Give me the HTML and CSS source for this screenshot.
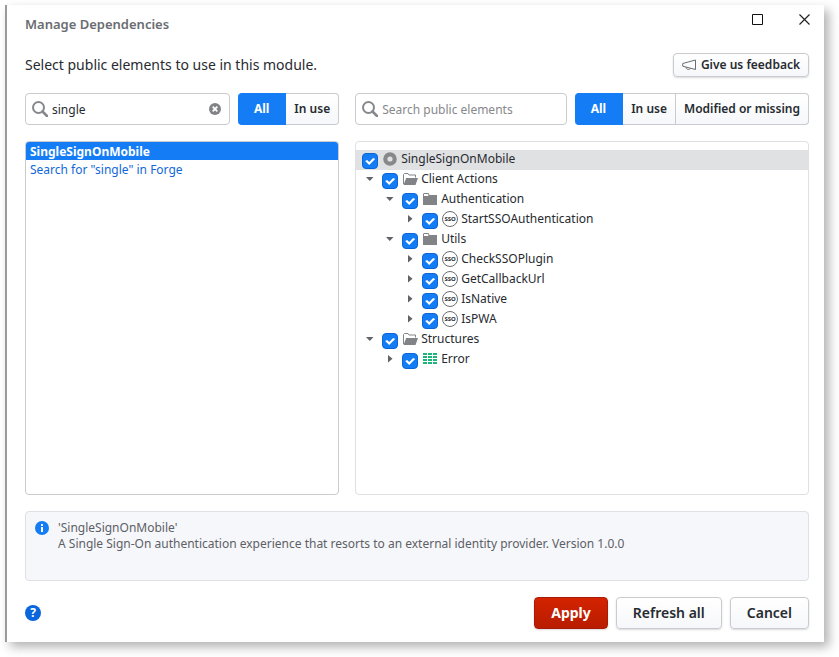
FILE: index.html
```html
<!DOCTYPE html>
<html lang="en">
<head>
<meta charset="utf-8">
<title>Manage Dependencies</title>
<link rel="stylesheet" href="styles.css">
</head>
<body>
<svg class="sprite" aria-hidden="true">
  <symbol id="search" viewBox="0 0 16 16"><circle cx="6.5" cy="6.5" r="5.5" fill="none" stroke="#86888b" stroke-width="2"/><path d="M10.5 10.5 15 15" stroke="#86888b" stroke-width="2.6" stroke-linecap="round"/></symbol>
  <symbol id="open-folder" viewBox="0 0 15 12"><path d="M.5 11V1.500L1.500 .5H5L6 2H12.500V4.500" fill="none" stroke="#818386"/><path d="M3.200 5H15L12.500 12H.5Z" fill="#818386"/></symbol>
  <symbol id="folder" viewBox="0 0 15 12"><path d="M0 1 1 0H5.500L6.500 2H14V12H0Z" fill="#818386"/><path d="M1 1H5L5.500 2.500 5 3H1Z" fill="#fff"/></symbol>
  <symbol id="ring" viewBox="0 0 14 14"><circle cx="7" cy="7" r="4.700" fill="#e0e1e3" stroke="#86888b" stroke-width="4.200"/></symbol>
  <symbol id="down" viewBox="0 0 8 8"><path d="M0 2H7.500L3.800 6Z" fill="#606368"/></symbol>
  <symbol id="right" viewBox="0 0 8 8"><path d="M2 0 6.500 3.800 2 7.500Z" fill="#606368"/></symbol>
  <symbol id="table" viewBox="0 0 14 12"><path d="M0 1H4M5 1H9M10 1H14M0 4H4M5 4H9M10 4H14M0 7H4M5 7H9M10 7H14M0 10H4M5 10H9M10 10H14" stroke="#1fb57a" stroke-width="2"/></symbol>
</svg>
<main class="dialog">
  <header class="titlebar">
    <h1>Manage Dependencies</h1>
    <div class="window-controls">
      <button aria-label="Maximize"><svg width="13" height="13" viewBox="0 0 13 13"><path d="M1.500 1.500H11.500V11.500H1.500Z" fill="none" stroke="#111"/></svg></button>
      <button aria-label="Close"><svg width="13" height="13" viewBox="0 0 13 13"><path d="M1.500 1.500 11.500 11.500M11.500 1.500 1.500 11.500" stroke="#222" stroke-width="1.200"/></svg></button>
    </div>
  </header>
  <div class="intro">
    <p>Select public elements to use in this module.</p>
    <button class="button small"><svg width="15" height="12" viewBox="0 0 15 12"><path d="M.7 4.500 13.500 1V10.500L.7 7.200ZM4 8.200C4 11 8 11 8.300 9.300" fill="none" stroke="#6a6d71"/></svg>Give us feedback</button>
  </div>
  <div class="columns">
    <section class="column">
      <div class="toolbar">
        <div class="search">
          <svg class="lens"><use href="#search"/></svg>
          <input type="text" value="single" aria-label="Search modules">
          <button class="clear" aria-label="Clear search"><svg width="12" height="12" viewBox="0 0 12 12"><circle cx="6" cy="6" r="6" fill="#818386"/><path d="M3.700 3.700 8.300 8.300M8.300 3.700 3.700 8.300" stroke="#fff" stroke-width="1.800"/></svg></button>
        </div>
        <div class="segments"><button class="active">All</button><button>In use</button></div>
      </div>
      <div class="panel modules">
        <a class="selected" href="#">SingleSignOnMobile</a>
        <a href="#">Search for "single" in Forge</a>
      </div>
    </section>
    <section class="column">
      <div class="toolbar">
        <div class="search">
          <svg class="lens"><use href="#search"/></svg>
          <input type="text" placeholder="Search public elements" aria-label="Search public elements">
        </div>
        <div class="segments"><button class="active">All</button><button>In use</button><button>Modified or missing</button></div>
      </div>
      <div class="panel elements">
        <div class="row root"><input type="checkbox" id="e0" checked><svg class="icon"><use href="#ring" x="1" y="1" width="14" height="14"/></svg><label for="e0">SingleSignOnMobile</label></div>
        <ul>
          <li>
            <div class="row"><button class="twisty" aria-label="Collapse"><svg><use href="#down"/></svg></button><input type="checkbox" id="e1" checked><svg class="icon"><use href="#open-folder" x="1" y="2" width="15" height="12"/></svg><label for="e1">Client Actions</label></div>
            <ul>
              <li>
                <div class="row"><button class="twisty" aria-label="Collapse"><svg><use href="#down"/></svg></button><input type="checkbox" id="e2" checked><svg class="icon"><use href="#folder" x="1" y="2" width="15" height="12"/></svg><label for="e2">Authentication</label></div>
                <ul>
                  <li><div class="row"><button class="twisty" aria-label="Expand"><svg><use href="#right"/></svg></button><input type="checkbox" id="e3" checked><span class="icon sso">SSO</span><label for="e3">StartSSOAuthentication</label></div></li>
                </ul>
              </li>
              <li>
                <div class="row"><button class="twisty" aria-label="Collapse"><svg><use href="#down"/></svg></button><input type="checkbox" id="e4" checked><svg class="icon"><use href="#folder" x="1" y="2" width="15" height="12"/></svg><label for="e4">Utils</label></div>
                <ul>
                  <li><div class="row"><button class="twisty" aria-label="Expand"><svg><use href="#right"/></svg></button><input type="checkbox" id="e5" checked><span class="icon sso">SSO</span><label for="e5">CheckSSOPlugin</label></div></li>
                  <li><div class="row"><button class="twisty" aria-label="Expand"><svg><use href="#right"/></svg></button><input type="checkbox" id="e6" checked><span class="icon sso">SSO</span><label for="e6">GetCallbackUrl</label></div></li>
                  <li><div class="row"><button class="twisty" aria-label="Expand"><svg><use href="#right"/></svg></button><input type="checkbox" id="e7" checked><span class="icon sso">SSO</span><label for="e7">IsNative</label></div></li>
                  <li><div class="row"><button class="twisty" aria-label="Expand"><svg><use href="#right"/></svg></button><input type="checkbox" id="e8" checked><span class="icon sso">SSO</span><label for="e8">IsPWA</label></div></li>
                </ul>
              </li>
            </ul>
          </li>
          <li>
            <div class="row"><button class="twisty" aria-label="Collapse"><svg><use href="#down"/></svg></button><input type="checkbox" id="e9" checked><svg class="icon"><use href="#open-folder" x="1" y="2" width="15" height="12"/></svg><label for="e9">Structures</label></div>
            <ul>
              <li><div class="row"><button class="twisty" aria-label="Expand"><svg><use href="#right"/></svg></button><input type="checkbox" id="e10" checked><svg class="icon"><use href="#table" x="1" y="2" width="14" height="12"/></svg><label for="e10">Error</label></div></li>
            </ul>
          </li>
        </ul>
      </div>
    </section>
  </div>
  <section class="info">
    <svg width="14" height="14" viewBox="0 0 14 14"><circle cx="7" cy="7" r="7" fill="#147df5"/><path d="M6 3H8V5H6ZM6 6H8V11H6Z" fill="#fff"/></svg>
    <p>'SingleSignOnMobile'<br>A Single Sign-On authentication experience that resorts to an external identity provider. Version 1.0.0</p>
  </section>
  <footer class="footer">
    <button class="help" aria-label="Help">?</button>
    <div class="actions">
      <button class="button primary">Apply</button>
      <button class="button">Refresh all</button>
      <button class="button">Cancel</button>
    </div>
  </footer>
</main>
</body>
</html>
```
FILE: styles.css
```css
* { box-sizing: border-box; }
body {
  margin: 0;
  min-height: 100vh;
  padding: 5px 15px 15px 5px;
  display: flex;
  background: #fff;
  color: #272b30;
  font: 12px/16px "Noto Sans", sans-serif;
}
h1, p, ul { margin: 0; padding: 0; }
ul { list-style: none; }
button { font: inherit; color: inherit; background: none; border: 0; padding: 0; margin: 0; }
a { text-decoration: none; }
.sprite { position: absolute; width: 0; height: 0; }

.dialog {
  flex: 1;
  display: flex;
  flex-direction: column;
  gap: 16px;
  padding: 0 15px 13px 18px;
  border-left: 2px solid #999a9c;
  background: #fff;
  box-shadow: 5px 5px 10px rgba(0, 0, 0, 0.3);
}

.titlebar { display: flex; justify-content: space-between; height: 32px; }
h1 { padding-top: 10px; font-size: 13px; line-height: 18px; font-weight: 600; color: #6a6d71; }
.window-controls { display: flex; gap: 34px; padding: 8px 0 0; margin-right: -2px; align-items: flex-start; }
.window-controls button, .window-controls svg { display: block; width: 13px; height: 13px; }

.intro { display: flex; justify-content: space-between; align-items: center; }
.intro p { font-size: 14px; line-height: 24px; }

.button {
  height: 32px;
  padding: 0 16px;
  border: 1px solid #c9cbcf;
  border-radius: 4px;
  background: linear-gradient(#fff, #f6f7fa);
  box-shadow: 0 1px 2px rgba(0, 0, 0, 0.15);
  font-size: 14px;
  font-weight: 600;
}
.button.small { display: flex; align-items: center; gap: 4px; height: 24px; padding: 0 8px; font-size: 12px; }
.button.primary { background: linear-gradient(#d42300, #b81c00); border-color: #a91b06; color: #fff; font-weight: 700; }

.columns { flex: 1; display: grid; grid-template-columns: 9fr 13fr; gap: 16px; }
.column { display: flex; flex-direction: column; gap: 16px; min-width: 0; }
.toolbar { display: flex; gap: 8px; height: 32px; }
.search {
  flex: 1;
  min-width: 0;
  display: flex;
  align-items: center;
  gap: 4px;
  padding: 0 8px 0 6px;
  border: 1px solid #c9cbcf;
  border-radius: 4px;
}
.search input {
  flex: 1;
  min-width: 0;
  height: 24px;
  padding: 0;
  border: 0;
  outline: 0;
  background: none;
  color: #272b30;
  font: 12px/16px "Noto Sans", sans-serif;
}
.search input::placeholder { color: #86888b; opacity: 1; }
.lens { flex: none; width: 16px; height: 16px; }
.clear, .clear svg { display: block; }

.segments { display: flex; }
.segments button {
  padding: 0 8px;
  border: 1px solid #c9cbcf;
  border-left-width: 0;
  background: linear-gradient(#fff, #f6f7fa);
  font-weight: 600;
}
.segments button:last-child { border-radius: 0 4px 4px 0; }
.segments .active { padding: 0 16px; border-color: #147df5; border-radius: 4px 0 0 4px; background: #147df5; color: #fff; font-weight: 700; }

.panel { flex: 1; border: 1px solid #c9cbcf; border-radius: 4px; overflow: hidden; }
.modules a { display: block; padding: 1px 4px 0; line-height: 17px; color: #1068d8; }
.modules .selected { background: #147df5; color: #fff; font-weight: 700; }
.elements { padding-top: 8px; border-color: #dfe0e3; }

.row { display: flex; align-items: flex-start; height: 20px; }
.root { padding-left: 6px; background: #e0e1e3; }
.elements > ul { padding-left: 6px; }
.elements ul ul { padding-left: 20px; }
.row label { line-height: 17px; }
.row .icon { flex: none; width: 16px; height: 16px; margin: 1px 3px 0 4px; }
.row input {
  appearance: none;
  flex: none;
  width: 16px;
  height: 16px;
  margin: 3px 0 0;
  border: 1px solid #0b66d6;
  border-radius: 4px;
  background: #147df5;
}
.row input:checked::before {
  content: "";
  display: block;
  height: 14px;
  background: #fff;
  clip-path: polygon(2px 7px, 4px 6px, 6px 8px, 10px 4px, 12px 5px, 6px 11px);
}
.twisty { flex: none; width: 20px; height: 18px; padding-left: 4px; }
.twisty svg { display: block; width: 8px; height: 8px; }
.sso {
  border: 1px solid #6a6d71;
  border-radius: 50%;
  font-size: 6px;
  line-height: 14px;
  font-weight: 700;
  text-align: center;
}

.info {
  display: flex;
  gap: 9px;
  min-height: 70px;
  padding: 8px 9px;
  border: 1px solid #dfe0e3;
  border-radius: 4px;
  background: #f6f7fa;
  color: #5c6066;
}
.info svg { flex: none; margin-top: 1px; }

.footer { display: flex; justify-content: space-between; align-items: center; }
.help { width: 16px; height: 16px; border-radius: 50%; background: #0a66dc; color: #fff; font-weight: 700; }
.actions { display: flex; gap: 8px; }
```
